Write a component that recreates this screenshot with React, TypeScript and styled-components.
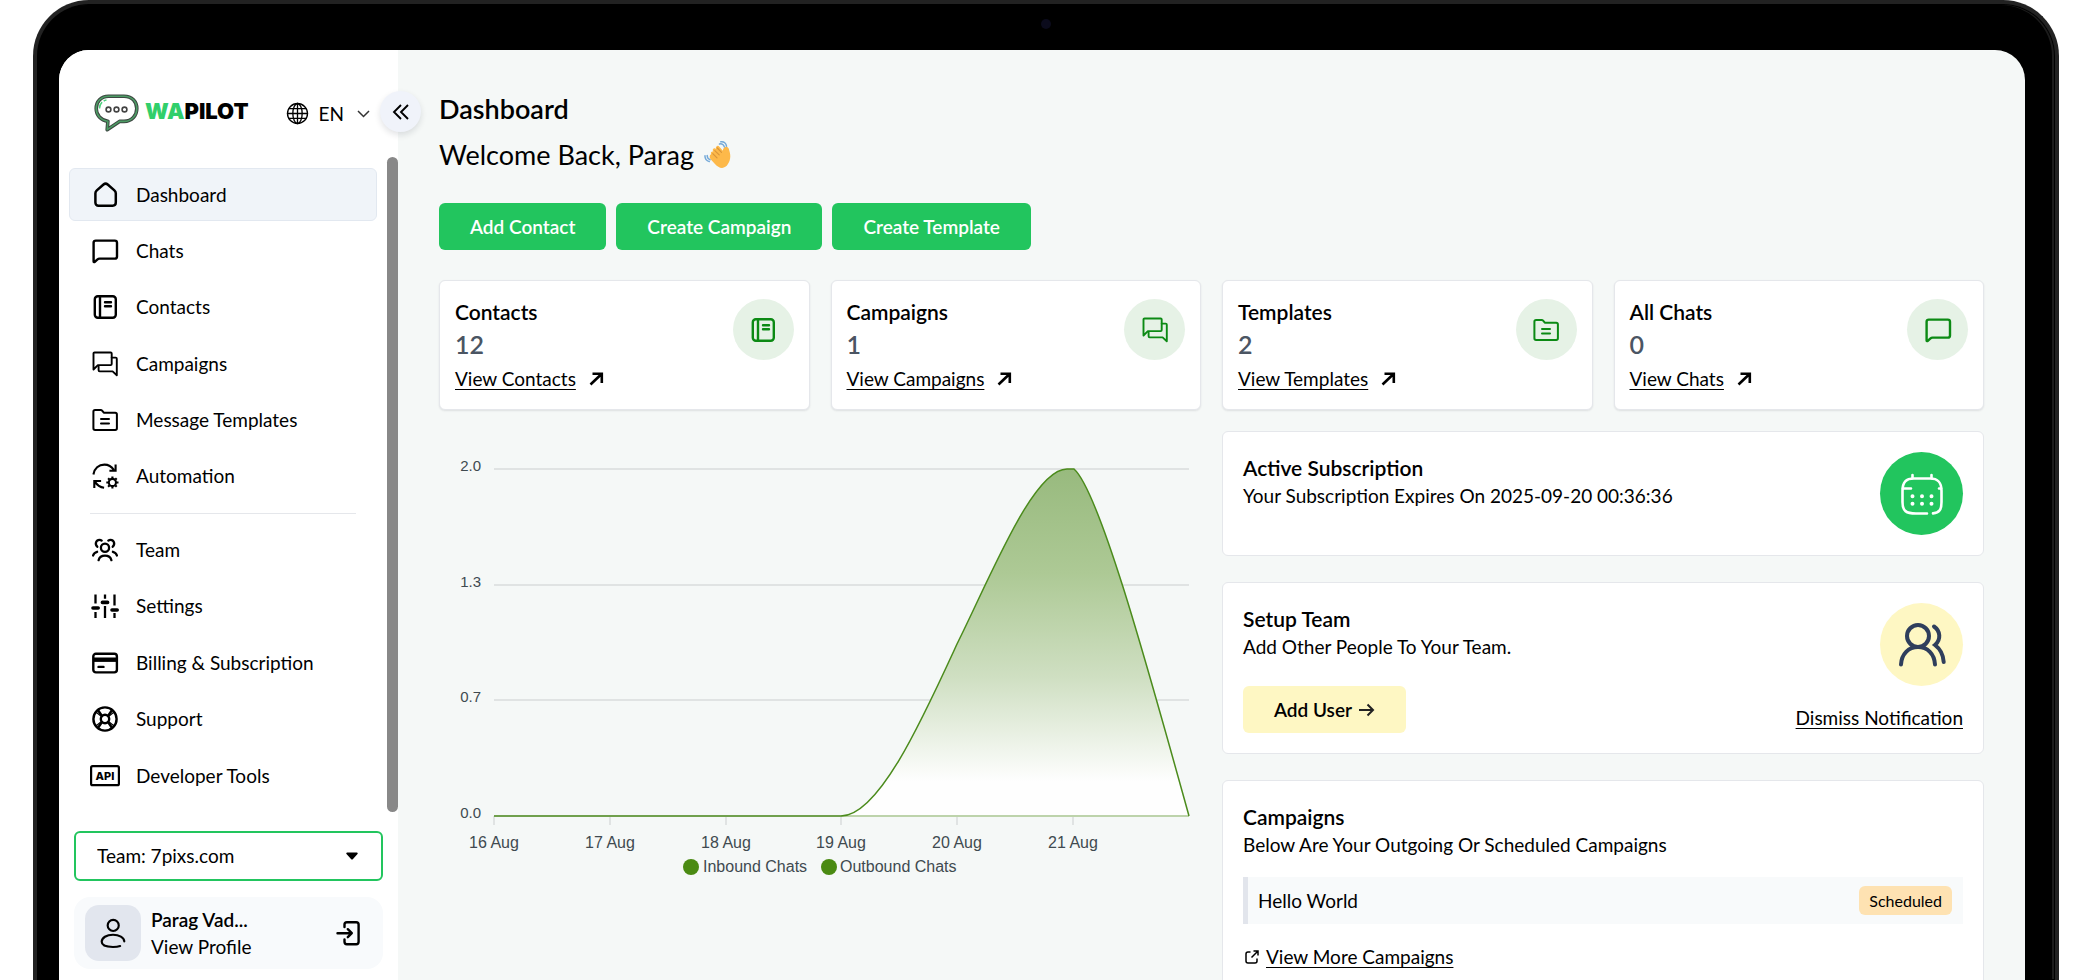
import React from "react";
import styled, { createGlobalStyle, css } from "styled-components";

const GlobalStyle = createGlobalStyle`
  *, *::before, *::after { box-sizing: border-box; }
  body {
    margin: 0;
    background: #fff;
    color: #000;
    font-family: Lato, "Open Sans", sans-serif;
    font-size: 19px;
    line-height: 24px;
  }
  h1, h2, p, ul { margin: 0; padding: 0; }
  ul { list-style: none; }
  a { color: inherit; }
  button, select { font: inherit; color: inherit; cursor: pointer; }
  svg { display: block; flex: none; }
`;

/* ---------- device ---------- */

const Page = styled.div`
  height: 100vh;
  overflow: hidden;
  display: flex;
  padding: 0 25px 0 33px;
`;

const Device = styled.div`
  position: relative;
  flex: 1;
  min-width: 0;
  display: flex;
  padding: 46px 30px 0 22px;
  background: #000;
  border: 4px solid #222;
  border-bottom: 0;
  border-radius: 56px 56px 0 0;
  box-shadow: inset 0 0 0 1px #000, inset -2px 0 0 1px #1c1c1c;
`;

const Camera = styled.span`
  position: absolute;
  top: 15px;
  left: 50%;
  width: 10px;
  height: 10px;
  margin-left: -5px;
  border-radius: 50%;
  background: #0b0b1c;
`;

const Screen = styled.div`
  flex: 1;
  min-width: 0;
  display: flex;
  background: #f5f8f7;
  border-radius: 30px 30px 0 0;
  overflow: hidden;
`;

/* ---------- sidebar ---------- */

const Sidebar = styled.aside`
  position: relative;
  flex: none;
  width: 339px;
  background: #fff;
`;

const Brand = styled.header`
  display: flex;
  align-items: center;
  height: 107px;
  padding: 18px 28px 0 35px;
`;

const BrandName = styled.span`
  margin: 0 0 4px 6px;
  font-family: Inter, sans-serif;
  font-weight: 900;
  font-size: 22px;
  em { font-style: normal; color: #31cf6b; }
`;

const Language = styled.button`
  display: flex;
  align-items: center;
  margin: 2px 0 0 auto;
  padding: 0;
  border: 0;
  background: none;
  span { margin: 0 13px 0 9px; }
`;

const Collapse = styled.button`
  position: absolute;
  top: 41px;
  right: -23px;
  display: grid;
  place-items: center;
  width: 41px;
  height: 41px;
  padding: 0;
  border: 0;
  border-radius: 50%;
  background: #f0f3fa;
  box-shadow: 0 3px 6px rgba(15, 23, 42, 0.12);
`;

const NavScroll = styled.div`
  display: flex;
  align-items: stretch;
`;

const Nav = styled.nav`
  flex: 1;
  padding: 11px 10px 10px;
`;

const NavGroup = styled.ul<{ $height: number }>`
  display: flex;
  flex-direction: column;
  justify-content: space-between;
  height: ${(p) => p.$height}px;
`;

const NavLink = styled.a<{ $active?: boolean }>`
  display: flex;
  align-items: center;
  gap: 16px;
  height: 53px;
  padding-left: 20px;
  border: 1px solid transparent;
  border-radius: 6px;
  text-decoration: none;
  ${(p) =>
    p.$active &&
    css`
      background: #f0f4f9;
      border-color: #e2e8f0;
    `}
`;

const Divider = styled.hr`
  height: 1px;
  margin: 10px 21px 9px;
  border: 0;
  background: #e5e7eb;
`;

const ScrollThumb = styled.div`
  width: 11px;
  border-radius: 6px;
  background: #888;
`;

const TeamPicker = styled.label`
  position: relative;
  display: block;
  margin: 19px 15px 0;
  svg {
    position: absolute;
    top: 21px;
    right: 25px;
    pointer-events: none;
  }
`;

const TeamSelect = styled.select`
  appearance: none;
  width: 100%;
  height: 50px;
  padding: 0 48px 0 21px;
  border: 2px solid #22c55e;
  border-radius: 6px;
  background: #fff;
`;

const Profile = styled.div`
  display: flex;
  align-items: center;
  height: 72px;
  margin: 16px 15px 0;
  padding: 0 20px 0 11px;
  border-radius: 16px;
  background: #f8fafc;
`;

const Avatar = styled.span`
  display: grid;
  place-items: center;
  width: 56px;
  height: 56px;
  border-radius: 14px;
  background: #e2e6ee;
`;

const ProfileText = styled.div`
  flex: 1;
  min-width: 0;
  margin-left: 10px;
  line-height: 27px;
  strong { display: block; font-weight: 600; }
  a { text-decoration: none; }
`;

const IconButton = styled.button`
  padding: 0;
  border: 0;
  background: none;
`;

/* ---------- main ---------- */

const Main = styled.main`
  flex: 1;
  min-width: 0;
  padding: 43px 41px 0;
`;

const Title = styled.h1`
  font-size: 27px;
  font-weight: 600;
  line-height: 32px;
`;

const Welcome = styled.p`
  display: flex;
  align-items: center;
  gap: 10px;
  margin-top: 14px;
  font-size: 27px;
  line-height: 32px;
`;

const Actions = styled.div`
  display: flex;
  gap: 10px;
  margin: 32px 0 30px;
`;

const Button = styled.button<{ $tone?: "green" | "yellow" }>`
  display: flex;
  align-items: center;
  gap: 6px;
  height: 47px;
  padding: 0 31px;
  border: 0;
  border-radius: 6px;
  font-weight: 600;
  background: ${(p) => (p.$tone === "yellow" ? "#fef7c3" : "#22c55e")};
  color: ${(p) => (p.$tone === "yellow" ? "#000" : "#fff")};
`;

const Stats = styled.section`
  display: grid;
  grid-template-columns: repeat(4, 1fr);
  gap: 21px;
`;

const StatCard = styled.article`
  display: flex;
  justify-content: space-between;
  padding: 18px 15px;
  border: 1px solid #e5e7eb;
  border-radius: 6px;
  background: #fff;
  box-shadow: 0 1px 2px rgba(15, 23, 42, 0.1);
`;

const CardTitle = styled.h2`
  font-size: 21px;
  font-weight: 600;
  line-height: 26px;
`;

const StatValue = styled.p`
  margin: 3px 0 7px;
  font-size: 25px;
  font-weight: 600;
  line-height: 32px;
  color: #4b5563;
`;

const StatLink = styled.a`
  display: flex;
  align-items: center;
  gap: 13px;
  text-decoration: none;
  span { text-decoration: underline; text-underline-offset: 3px; text-decoration-thickness: 1px; }
`;

const Disc = styled.span<{ $size: number; $bg: string; $fg: string }>`
  display: grid;
  place-items: center;
  flex: none;
  width: ${(p) => p.$size}px;
  height: ${(p) => p.$size}px;
  border-radius: 50%;
  background: ${(p) => p.$bg};
  color: ${(p) => p.$fg};
`;

const Columns = styled.div`
  display: grid;
  grid-template-columns: 1fr 1fr;
  gap: 21px;
  margin-top: 21px;
`;

const ChartBox = styled.figure`
  margin: 0;
  svg { width: 100%; height: auto; }
  text { font-family: "Liberation Sans", Arial, sans-serif; fill: #404a50; }
`;

const Stack = styled.div`
  display: flex;
  flex-direction: column;
  gap: 26px;
`;

const InfoCard = styled.article`
  padding: 20px;
  border: 1px solid #e5e7eb;
  border-radius: 6px;
  background: #fff;
`;

const InfoHead = styled.div`
  display: flex;
  justify-content: space-between;
`;

const InfoText = styled.div`
  padding-top: 3px;
  p { line-height: 30px; }
`;

const InfoFoot = styled.div`
  display: flex;
  justify-content: space-between;
  align-items: flex-end;
`;

const TextLink = styled.a`
  line-height: 30px;
  text-underline-offset: 3px;
  text-decoration-thickness: 1px;
`;

const CampaignRow = styled.div`
  display: flex;
  align-items: center;
  justify-content: space-between;
  height: 47px;
  margin-top: 17px;
  padding: 0 11px 0 10px;
  border-left: 5px solid #e2e5ec;
  background: #f8fafb;
`;

const Badge = styled.span`
  padding: 0 10px;
  border-radius: 6px;
  background: #fee2b2;
  font-size: 16px;
  line-height: 29px;
`;

const MoreLink = styled.div`
  display: flex;
  align-items: center;
  gap: 7px;
  margin-top: 18px;
  padding-left: 2px;
`;

/* ---------- icons ---------- */

type IconProps = { size?: number };

const Icon: React.FC<IconProps & { children: React.ReactNode; w?: number }> = ({ size = 30, w = 2, children }) => (
  <svg
    width={size}
    height={size}
    viewBox="0 0 30 30"
    fill="none"
    stroke="currentColor"
    strokeWidth={w}
    strokeLinecap="round"
    strokeLinejoin="round"
    aria-hidden="true"
  >
    {children}
  </svg>
);

const HomeIcon = (p: IconProps) => (
  <Icon {...p} w={2.5}>
    <path d="M5.400 13.300c0-1.200.5-2.100 1.400-2.900l6.700-5.900c1.300-1.100 2.900-1.100 4.200 0l6.700 5.900c.9.8 1.400 1.700 1.400 2.900v9.300c0 1.900-1.200 3.100-3.100 3.100H8.500c-1.900 0-3.100-1.200-3.100-3.100z" />
  </Icon>
);
const ChatIcon = (p: IconProps) => (
  <Icon {...p} w={2.4}>
    <path d="M3.600 25.600V6.800c0-1.400.8-2.200 2.200-2.200h19c1.400 0 2.200.8 2.200 2.200v13.600c0 1.400-.8 2.200-2.200 2.200H9.600c-.9 0-1.700.4-2.400 1l-2.400 2.200c-.6.5-1.200.4-1.200-.2z" />
  </Icon>
);
const ContactsIcon = (p: IconProps) => (
  <Icon {...p} w={2.4}>
    <rect x="4.800" y="4.200" width="21" height="21.600" rx="3" />
    <path d="M10 4.500v21M15 10.200h6M15 14.200h6" />
  </Icon>
);
const CampaignIcon = (p: IconProps) => (
  <Icon {...p} w={1.9}>
    <path d="M3.500 20.500V4.600c0-.7.4-1.100 1.100-1.100h16c.7 0 1.100.4 1.100 1.100V15c0 .7-.4 1.100-1.100 1.100H7.900z" />
    <path d="M21.700 8.600h4c.7 0 1.100.4 1.100 1.100v16.500l-4.200-3.800H9.700c-.7 0-1.100-.4-1.100-1.100v-4" />
  </Icon>
);
const FolderIcon = (p: IconProps) => (
  <Icon {...p} w={2}>
    <path d="M3.400 6.600c0-1 .7-1.700 1.700-1.700h5.600c.6 0 1 .2 1.400.7l1.700 2.100h11.400c1 0 1.700.7 1.700 1.700v13.800c0 1-.7 1.700-1.700 1.700H5.100c-1 0-1.700-.7-1.700-1.700z" />
    <path d="M11 14h8M11 18.500h8" />
  </Icon>
);
const AutomationIcon = (p: IconProps) => (
  <Icon {...p} w={2.1}>
    <path d="M3.400 13.500C4.200 7.400 8.800 3.600 14.400 3.600c4 0 7.200 1.900 9.400 5.300M25.600 3.600v6.200h-6.200" strokeLinecap="butt" strokeLinejoin="miter" />
    <path d="M4.300 27v-7h6.800M4.900 20.600c2.200 3.600 4.800 5.600 9.200 6.200" strokeLinecap="butt" strokeLinejoin="miter" />
    <circle cx="22.400" cy="21.500" r="3.600" />
    <path
      d="M22.400 15.400v2M22.400 25.600v2M16.300 21.500h2M26.500 21.500h2M18.100 17.200l1.300 1.300M25.400 24.500l1.300 1.300M18.100 25.800l1.300-1.300M25.400 18.500l1.300-1.300"
      strokeLinecap="butt"
    />
  </Icon>
);
const TeamIcon = (p: IconProps) => (
  <Icon {...p} w={2.3}>
    <circle cx="15" cy="12.800" r="4.100" />
    <path d="M8.600 25.200c.7-2.900 3.300-4.600 6.400-4.600s5.700 1.700 6.400 4.600" />
    <path d="M7.300 11.800C4.300 8.600 6.400 4.800 9.400 4.800c.9 0 1.700.3 2.300.8M22.700 11.800c3-3.200.9-7-2.100-7-.9 0-1.700.3-2.300.8" />
    <path d="M3.100 20.500c.5-1.900 1.900-3.100 4-3.700M26.900 20.500c-.5-1.900-1.900-3.100-4-3.700" />
  </Icon>
);
const SettingsIcon = (p: IconProps) => (
  <Icon {...p} w={2.3}>
    <path d="M5.500 3.500v9M5.500 21v6M15 3.500v4.200M15 15v12M24.500 3.500v11M24.500 22v5" strokeLinecap="butt" />
    <path d="M3 17h5.200M12.400 11.400h5.200M22 19h5.200" strokeWidth="3.600" />
  </Icon>
);
const CardIcon = (p: IconProps) => (
  <Icon {...p} w={2.4}>
    <rect x="3.300" y="5.800" width="23.600" height="18.600" rx="2.600" />
    <path d="M3.300 11.700h23.600" strokeWidth="4.400" strokeLinecap="butt" />
    <path d="M8.500 18.900h5" />
  </Icon>
);
const SupportIcon = (p: IconProps) => (
  <Icon {...p} w={2.4}>
    <circle cx="15" cy="15" r="11.600" />
    <circle cx="15" cy="15" r="4.200" />
    <path d="M12 12 8.200 6.500M18 12l3.800-5.500M12 18l-3.800 5.500M18 18l3.800 5.500" />
    <path d="M11.500 12.500 6.500 8.500M18.500 12.500l5-4M11.500 17.500l-5 4M18.500 17.500l5 4" strokeWidth="1.200" />
  </Icon>
);
const ApiIcon = (p: IconProps) => (
  <Icon {...p} w={2.2}>
    <rect x="1.100" y="5.200" width="27.800" height="19" rx="1.500" />
    <text
      x="15"
      y="18.800"
      textAnchor="middle"
      fontFamily="Inter, sans-serif"
      fontWeight="800"
      fontSize="11"
      fill="currentColor"
      stroke="none"
    >
      API
    </text>
  </Icon>
);
const UserIcon = () => (
  <Icon size={32} w={2}>
    <circle cx="15.200" cy="7.900" r="5.200" />
    <path d="M21.700 27.200c-2 .7-4.200.9-6.700.9-6.600 0-10.600-1.300-10.600-4.800 0-3.800 4.500-6.700 10.600-6.700 5.800 0 10.400 2.600 10.600 6.200" />
  </Icon>
);
const LogoutIcon = () => (
  <Icon size={30} w={2.4}>
    <path d="M11.500 9V6.600c0-1.500.9-2.400 2.400-2.400h9.300c1.500 0 2.400.9 2.400 2.400v17.200c0 1.500-.9 2.400-2.400 2.400h-9.300c-1.500 0-2.400-.9-2.400-2.400v-2.400" />
    <path d="M4.500 15.200h14M14.800 11.200l4 4-4 4" />
  </Icon>
);
const GlobeIcon = () => (
  <Icon size={25} w={1.6}>
    <circle cx="15" cy="15" r="12" />
    <ellipse cx="15" cy="15" rx="5.600" ry="12" />
    <path d="M3 15h24M15 3v24M5 9.200h20M5 20.800h20" />
  </Icon>
);
const ChevronDownIcon = () => (
  <svg width="13" height="8" viewBox="0 0 13 8" fill="none" stroke="#333" strokeWidth="1.500" aria-hidden="true">
    <path d="M1 1l5.500 5.500L12 1" />
  </svg>
);
const ChevronsLeftIcon = () => (
  <svg width="18" height="18" viewBox="0 0 18 18" fill="none" stroke="#000" strokeWidth="1.900" aria-hidden="true">
    <path d="M9 2 2 9l7 7M16 2 9 9l7 7" />
  </svg>
);
const CaretIcon = () => (
  <svg width="12" height="8" viewBox="0 0 12 8" aria-hidden="true">
    <path d="M1.200.5h9.600c.9 0 1.200.8.7 1.400L7 7c-.6.7-1.400.7-2 0L.5 1.900C0 1.300.3.500 1.200.5z" />
  </svg>
);
const ArrowUpRightIcon = () => (
  <svg width="15" height="15" viewBox="0 0 15 15" fill="none" stroke="#000" strokeWidth="2.600" aria-hidden="true">
    <path d="M1.500 12.500 12 2.500M3.500 1.800h9.300v9.300" />
  </svg>
);
const ArrowRightIcon = () => (
  <svg width="17" height="14" viewBox="0 0 17 14" fill="none" stroke="#222" strokeWidth="2" aria-hidden="true">
    <path d="M1 7h14M9.500 1.500 15 7l-5.500 5.500" />
  </svg>
);
const ExternalIcon = () => (
  <svg width="14" height="14" viewBox="0 0 14 14" fill="none" stroke="#000" strokeWidth="1.500" aria-hidden="true">
    <path d="M5.500 2H3C1.800 2 1 2.800 1 4v7c0 1.200.8 2 2 2h7c1.200 0 2-.8 2-2V8.500M8.500 1H13v4.500M13 1 6.500 7.500" />
  </svg>
);
const CalendarIcon = () => (
  <svg width="44" height="44" viewBox="0 0 44 44" fill="none" stroke="#fff" strokeWidth="2.600" strokeLinecap="round" aria-hidden="true">
    <path d="M27 41.500h-11C6 41.500 2.500 39 2.500 30V19C2.500 10 6 6.500 14 6.500h16c8 0 11.500 3.500 11.500 12.500v11c0 7.500-2 10.800-8.500 11.400" />
    <path d="M12.500 3v3M31.500 3v3M3 16.500h8M41 16.500h-2" />
    <path d="M12.500 24.200v.1M22 24.200v.1M31.500 24.200v.1M12.500 31.700v.1M22 31.700v.1M31.500 31.700v.1" strokeWidth="4" />
  </svg>
);
const PeopleIcon = () => (
  <svg width="48" height="44" viewBox="0 0 48 44" fill="none" stroke="#2f3e5c" strokeWidth="4" strokeLinecap="round" aria-hidden="true">
    <circle cx="20" cy="13" r="11" />
    <path d="M3 41.500C3.500 31 10.500 24 20 24s16.500 7 17 17.500" />
    <path d="M36 3.500c6.500 4.500 7.200 13 1 18.500 5 3.800 8.300 9.500 8.700 17" />
  </svg>
);
const WaveIcon = () => (
  <svg width="27" height="28" viewBox="0 0 27 28" fill="none" aria-hidden="true">
    <path
      d="M7.200 13c-1.200-1.500 1-3.300 2.400-2-1.300-1.700-.9-3.100.1-3.600.9-.4 1.800 0 2.600.8-.9-1.500-.3-3 .9-3.300.9-.2 1.700.3 2.600 1.400l3 3.400c.4-1.900 1-3.700 2.600-4 1.400-.2 2.800.3 3.400 2.100.6 2.300 1.500 4.500 1.500 7.400 0 5.600-3.500 11.500-8.100 11.700-2.700.1-5-1.600-7-3.700l-4.600-4.900c-1.500-1.700-1.100-4.600.6-5.300z"
      fill="#fdb94a"
    />
    <path d="m8.800 12.600 4.200 4.200M10.800 9.600l4.400 4.300M13.300 7l4.200 4.400" stroke="#d9953a" strokeWidth="1.200" strokeLinecap="round" />
    <path d="M15.500 3c2.300-.6 4.300.5 4.800 2.800M16.800.8c3.200-.4 5.400 1.500 5.700 4.400M3.200 14.500c-.1 2 .8 3.500 2.800 4.200M1 14.800c-.2 3 1.500 5 4.300 5.800" stroke="#74a9d8" strokeWidth="1.500" strokeLinecap="round" />
  </svg>
);
const LogoIcon = () => (
  <svg width="45" height="38" viewBox="0 0 45 38" fill="none" strokeLinejoin="round" aria-hidden="true">
    <path
      d="M14.500 2.200h15.500c8 0 12.800 5.500 12.800 12.300S38 27.400 30 27.400h-4.500L13.200 35.700l.7-8.500C6.800 26.500 2.200 21 2.200 14.500 2.200 7.700 7 2.200 14.500 2.200z"
      stroke="#3d4742"
      strokeWidth="3.600"
    />
    <path
      d="M14.500 2.200h15.500c8 0 12.800 5.500 12.800 12.300S38 27.400 30 27.400h-4.500L13.200 35.700l.7-8.500C6.800 26.500 2.200 21 2.200 14.500 2.200 7.700 7 2.200 14.500 2.200z"
      stroke="#4c9c64"
      strokeWidth="1.600"
    />
    <path d="M5.500 14.500c.1-4.500 2.700-7.700 7-8.500" stroke="#4fd27f" strokeWidth="1.500" strokeDasharray="7 2 3 2" />
    <g stroke="#444" strokeWidth="1.600">
      <circle cx="14.500" cy="15.500" r="2.400" />
      <circle cx="22.500" cy="15.500" r="2.400" />
      <circle cx="30.500" cy="15.500" r="2.400" />
    </g>
  </svg>
);

/* ---------- chart ---------- */

const GRID = [
  { y: 38, label: "2.0" },
  { y: 154, label: "1.3" },
  { y: 269, label: "0.7" },
  { y: 385, label: "0.0" },
];
const DAYS = ["16 Aug", "17 Aug", "18 Aug", "19 Aug", "20 Aug", "21 Aug"];
const CURVE = "M55 385H402C440 385 484 287 518 213C552 145 594 38 628 38H635C661 61 711 245 750 385";

const Chart = () => (
  <ChartBox>
    <svg viewBox="0 0 762 460" role="img" aria-label="Inbound and outbound chats per day">
      <defs>
        <linearGradient id="area" x1="0" y1="38" x2="0" y2="385" gradientUnits="userSpaceOnUse">
          <stop offset="0" stopColor="#98ba7e" />
          <stop offset="0.3" stopColor="#adc995" />
          <stop offset="0.6" stopColor="#cfdfc2" />
          <stop offset="0.9" stopColor="#fefefe" />
          <stop offset="1" stopColor="#fefefe" />
        </linearGradient>
      </defs>
      <g stroke="#e0e3e3" strokeWidth="2">
        {GRID.map((g) => (
          <path key={g.label} d={`M55 ${g.y}H750`} />
        ))}
        {DAYS.map((d, i) => (
          <path key={d} d={`M${55 + Math.round(i * 115.8)} 385v9`} />
        ))}
      </g>
      <path d={`${CURVE}z`} fill="url(#area)" />
      <path d="M402 385H750" stroke="#bdd3ab" strokeWidth="2" />
      <path d={CURVE} fill="none" stroke="#4b8b1c" strokeWidth="1.500" />
      {GRID.map((g) => (
        <text key={g.label} x="42" y={g.y + 2} textAnchor="end" fontSize="15">
          {g.label}
        </text>
      ))}
      {DAYS.map((d, i) => (
        <text key={d} x={55 + Math.round(i * 115.8)} y="417" textAnchor="middle" fontSize="16">
          {d}
        </text>
      ))}
      <circle cx="252" cy="436" r="8" fill="#4a8a12" />
      <text x="264" y="441" fontSize="16">
        Inbound Chats
      </text>
      <circle cx="390" cy="436" r="8" fill="#4a8a12" />
      <text x="401" y="441" fontSize="16">
        Outbound Chats
      </text>
    </svg>
  </ChartBox>
);

/* ---------- page data ---------- */

type NavItem = { label: string; Glyph: React.FC<IconProps> };

const PRIMARY: NavItem[] = [
  { label: "Dashboard", Glyph: HomeIcon },
  { label: "Chats", Glyph: ChatIcon },
  { label: "Contacts", Glyph: ContactsIcon },
  { label: "Campaigns", Glyph: CampaignIcon },
  { label: "Message Templates", Glyph: FolderIcon },
  { label: "Automation", Glyph: AutomationIcon },
];
const SECONDARY: NavItem[] = [
  { label: "Team", Glyph: TeamIcon },
  { label: "Settings", Glyph: SettingsIcon },
  { label: "Billing & Subscription", Glyph: CardIcon },
  { label: "Support", Glyph: SupportIcon },
  { label: "Developer Tools", Glyph: ApiIcon },
];
const STATS = [
  { title: "Contacts", value: "12", link: "View Contacts", Glyph: ContactsIcon },
  { title: "Campaigns", value: "1", link: "View Campaigns", Glyph: CampaignIcon },
  { title: "Templates", value: "2", link: "View Templates", Glyph: FolderIcon },
  { title: "All Chats", value: "0", link: "View Chats", Glyph: ChatIcon },
];

const NavList = ({ items, height, active }: { items: NavItem[]; height: number; active?: string }) => (
  <NavGroup $height={height}>
    {items.map(({ label, Glyph }) => (
      <li key={label}>
        <NavLink href="#" $active={label === active}>
          <Glyph />
          {label}
        </NavLink>
      </li>
    ))}
  </NavGroup>
);

export default function App() {
  return (
    <Page>
      <GlobalStyle />
      <Device>
        <Camera />
        <Screen>
          <Sidebar>
            <Brand>
              <LogoIcon />
              <BrandName>
                <em>WA</em>PILOT
              </BrandName>
              <Language type="button">
                <GlobeIcon />
                <span>EN</span>
                <ChevronDownIcon />
              </Language>
            </Brand>
            <NavScroll>
              <Nav>
                <NavList items={PRIMARY} height={335} active="Dashboard" />
                <Divider />
                <NavList items={SECONDARY} height={279} />
              </Nav>
              <ScrollThumb />
            </NavScroll>
            <TeamPicker>
              <TeamSelect aria-label="Team">
                <option>Team: 7pixs.com</option>
              </TeamSelect>
              <CaretIcon />
            </TeamPicker>
            <Profile>
              <Avatar>
                <UserIcon />
              </Avatar>
              <ProfileText>
                <strong>Parag Vad...</strong>
                <a href="#">View Profile</a>
              </ProfileText>
              <IconButton type="button" aria-label="Log out">
                <LogoutIcon />
              </IconButton>
            </Profile>
            <Collapse type="button" aria-label="Collapse sidebar">
              <ChevronsLeftIcon />
            </Collapse>
          </Sidebar>
          <Main>
            <Title>Dashboard</Title>
            <Welcome>
              Welcome Back, Parag
              <WaveIcon />
            </Welcome>
            <Actions>
              <Button type="button">Add Contact</Button>
              <Button type="button">Create Campaign</Button>
              <Button type="button">Create Template</Button>
            </Actions>
            <Stats>
              {STATS.map(({ title, value, link, Glyph }) => (
                <StatCard key={title}>
                  <div>
                    <CardTitle>{title}</CardTitle>
                    <StatValue>{value}</StatValue>
                    <StatLink href="#">
                      <span>{link}</span>
                      <ArrowUpRightIcon />
                    </StatLink>
                  </div>
                  <Disc $size={61} $bg="#e6f2e6" $fg="#0c8a14">
                    <Glyph size={30} />
                  </Disc>
                </StatCard>
              ))}
            </Stats>
            <Columns>
              <Chart />
              <Stack>
                <InfoCard>
                  <InfoHead>
                    <InfoText>
                      <CardTitle>Active Subscription</CardTitle>
                      <p>Your Subscription Expires On 2025-09-20 00:36:36</p>
                    </InfoText>
                    <Disc $size={83} $bg="#22c55e" $fg="#fff">
                      <CalendarIcon />
                    </Disc>
                  </InfoHead>
                </InfoCard>
                <InfoCard>
                  <InfoHead>
                    <InfoText>
                      <CardTitle>Setup Team</CardTitle>
                      <p>Add Other People To Your Team.</p>
                    </InfoText>
                    <Disc $size={83} $bg="#fef7c3" $fg="#2f3e5c">
                      <PeopleIcon />
                    </Disc>
                  </InfoHead>
                  <InfoFoot>
                    <Button type="button" $tone="yellow">
                      Add User
                      <ArrowRightIcon />
                    </Button>
                    <TextLink href="#">Dismiss Notification</TextLink>
                  </InfoFoot>
                </InfoCard>
                <InfoCard>
                  <InfoText>
                    <CardTitle>Campaigns</CardTitle>
                    <p>Below Are Your Outgoing Or Scheduled Campaigns</p>
                  </InfoText>
                  <CampaignRow>
                    Hello World
                    <Badge>Scheduled</Badge>
                  </CampaignRow>
                  <MoreLink>
                    <ExternalIcon />
                    <TextLink href="#">View More Campaigns</TextLink>
                  </MoreLink>
                </InfoCard>
              </Stack>
            </Columns>
          </Main>
        </Screen>
      </Device>
    </Page>
  );
}
